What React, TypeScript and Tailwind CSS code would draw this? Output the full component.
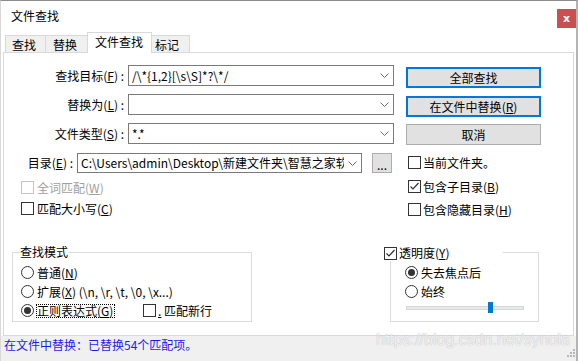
import type { FC, ReactNode } from "react";

const Acc: FC<{ k: string }> = ({ k }) => (
  <>
    (<span className="underline underline-offset-[1px] decoration-1">{k}</span>)
  </>
);

const Box: FC<{ checked?: boolean; disabled?: boolean }> = ({ checked, disabled }) => (
  <span
    className={`w-[13px] h-[13px] shrink-0 border bg-white flex items-center justify-center ${
      disabled ? "border-[#c4c4c4]" : "border-[#333333]"
    }`}
  >
    {checked && (
      <svg width="11" height="11" viewBox="0 0 11 11">
        <path d="M1.5 5.5 L4 8 L9.5 2" fill="none" stroke="#333" strokeWidth="1.2" />
      </svg>
    )}
  </span>
);

const Radio: FC<{ on?: boolean }> = ({ on }) => (
  <span className="w-[13px] h-[13px] shrink-0 rounded-full border border-[#333333] bg-white flex items-center justify-center">
    {on && <span className="w-[7px] h-[7px] rounded-full bg-[#333333]" />}
  </span>
);

const Chevron = () => (
  <svg width="9" height="5" viewBox="0 0 9 5" className="shrink-0">
    <path d="M0.5 0.5 L4.5 4.5 L8.5 0.5" fill="none" stroke="#6d6d6d" strokeWidth="1" />
  </svg>
);

const Combo: FC<{ size: string; text?: string }> = ({ size, text }) => (
  <div className={`${size} border border-[#7a7a7a] bg-white flex items-center pl-[3px] pr-[4px]`}>
    <span className="flex-1 min-w-0 overflow-hidden whitespace-nowrap">{text}</span>
    <span className="ml-[4px] flex items-center">
      <Chevron />
    </span>
  </div>
);

const Check: FC<{ checked?: boolean; disabled?: boolean; gap: string; children: ReactNode; className?: string }> = ({
  checked,
  disabled,
  gap,
  children,
  className,
}) => (
  <div className={`h-[13px] flex items-center ${className ?? ""}`}>
    <Box checked={checked} disabled={disabled} />
    <span className={`${gap} whitespace-nowrap ${disabled ? "text-[#a0a0a0]" : ""}`}>{children}</span>
  </div>
);

const App: FC = () => {
  return (
    <div className="w-[578px] h-[361px] bg-white relative overflow-hidden flex flex-col border-t border-t-[#8c8c8c] border-l border-l-[#d8d8d8] border-r-2 border-r-[#b4b4b4] text-[12px] leading-[16px] text-black font-['Noto_Sans_CJK_SC',sans-serif]">
      {/* title bar */}
      <div className="h-[31px] flex items-start shrink-0">
        <span className="ml-[10px] mt-[7px]">文件查找</span>
        <div className="ml-auto mt-[8px] w-[19px] h-[19px] bg-[#c75050] text-white flex items-center justify-center font-bold text-[11px] leading-none font-['DejaVu_Sans',sans-serif]">
          x
        </div>
      </div>

      {/* tabs */}
      <div className="h-[21px] flex items-end pl-[4px] shrink-0">
        <div className="w-[40px] h-[18px] border-l border-t border-[#d9d9d9] bg-[#f0f0f0] pl-[6px] flex items-center">查找</div>
        <div className="w-[42px] h-[18px] border-l border-t border-[#d9d9d9] bg-[#f0f0f0] pl-[7px] flex items-center">替换</div>
        <div className="relative z-10 w-[65px] h-[21px] border-l border-t border-r border-[#d9d9d9] bg-white pl-[7px] pt-[1px]">
          文件查找
        </div>
        <div className="w-[38px] h-[18px] border-t border-r border-[#d9d9d9] bg-[#f0f0f0] pl-[3px] flex items-center">标记</div>
      </div>

      {/* panel */}
      <div className="-mt-px ml-[2px] mr-[2px] h-[284px] shrink-0 border border-[#d9d9d9] bg-white flex flex-col">
        <div className="flex pt-[12px]">
          {/* left column */}
          <div className="w-[390px] flex flex-col">
            <div className="h-[21px] flex items-center">
              <span className="w-[120px] text-right whitespace-nowrap">
                查找目标<Acc k="F" /> :
              </span>
              <div className="ml-[4px]">
                <Combo size="w-[266px] h-[21px]" text="/\*{1,2}[\s\S]*?\*/" />
              </div>
            </div>
            <div className="mt-[8px] h-[21px] flex items-center">
              <span className="w-[120px] text-right whitespace-nowrap">
                替换为<Acc k="L" /> :
              </span>
              <div className="ml-[4px]">
                <Combo size="w-[266px] h-[21px]" />
              </div>
            </div>
            <div className="mt-[8px] h-[21px] flex items-center">
              <span className="w-[120px] text-right whitespace-nowrap">
                文件类型<Acc k="S" /> :
              </span>
              <div className="ml-[4px]">
                <Combo size="w-[266px] h-[21px]" text="*.*" />
              </div>
            </div>
            <div className="mt-[9px] h-[20px] flex items-center">
              <span className="w-[69px] text-right whitespace-nowrap">
                目录<Acc k="E" /> :
              </span>
              <div className="ml-[4px]">
                <Combo size="w-[285px] h-[20px]" text="C:\Users\admin\Desktop\新建文件夹\智慧之家软著" />
              </div>
              <div className="ml-[10px] w-[20px] h-[20px] border border-[#adadad] bg-[#e1e1e1] flex items-end justify-center leading-[14px]">
                ...
              </div>
            </div>
            <Check disabled gap="ml-[3px]" className="mt-[8px] pl-[17px]">
              全词匹配<Acc k="W" />
            </Check>
            <Check gap="ml-[3px]" className="mt-[8px] pl-[17px]">
              匹配大小写<Acc k="C" />
            </Check>
          </div>

          {/* right column */}
          <div className="ml-[12px] pt-[2px] flex flex-col">
            <div className="w-[135px] h-[21px] border-2 border-[#0078d7] bg-[#e1e1e1] flex items-center justify-center">
              全部查找
            </div>
            <div className="mt-[8px] w-[135px] h-[21px] border-2 border-[#0078d7] bg-[#e1e1e1] flex items-center justify-center">
              在文件中替换<Acc k="R" />
            </div>
            <div className="mt-[7px] w-[135px] h-[21px] border border-[#adadad] bg-[#e1e1e1] flex items-center justify-center">
              取消
            </div>
            <Check gap="ml-[2px]" className="mt-[11px] ml-[2px]">
              当前文件夹。
            </Check>
            <Check checked gap="ml-[2px]" className="mt-[11px] ml-[2px]">
              包含子目录<Acc k="B" />
            </Check>
            <Check gap="ml-[2px]" className="mt-[10px] ml-[2px]">
              包含隐藏目录<Acc k="H" />
            </Check>
          </div>
        </div>

        <div className="flex mt-[36px]">
          {/* search mode */}
          <div className="relative ml-[8px] w-[240px] h-[70px] border border-[#dcdcdc] pl-[8px] pt-[13px] flex flex-col gap-[6px]">
            <span className="absolute left-[7px] top-[-9px] bg-white">查找模式</span>
            <div className="h-[13px] flex items-center">
              <Radio />
              <span className="ml-[3px]">
                普通<Acc k="N" />
              </span>
            </div>
            <div className="h-[13px] flex items-center">
              <Radio />
              <span className="ml-[3px] whitespace-nowrap">
                扩展<Acc k="X" /> (\n, \r, \t, \0, \x...)
              </span>
            </div>
            <div className="h-[13px] flex items-center">
              <div className="w-[122px] shrink-0 flex items-center">
                <Radio on />
                <span className="ml-[2px] h-[14px] pr-[1px] border border-dotted border-black flex items-center whitespace-nowrap">
                  正则表达式<Acc k="G" />
                </span>
              </div>
              <Box />
              <span className="ml-[2px] whitespace-nowrap">
                <span className="underline underline-offset-[1px]">.</span> 匹配新行
              </span>
            </div>
          </div>

          {/* transparency */}
          <div className="relative ml-[138px] w-[149px] h-[70px] border border-[#dcdcdc] pl-[14px] pt-[13px] flex flex-col">
            <div className="absolute left-[-7px] top-[-8px] w-[119px] h-[16px] bg-white flex items-center">
              <Box checked />
              <span className="ml-[2px]">
                透明度<Acc k="Y" />
              </span>
            </div>
            <div className="h-[13px] flex items-center">
              <Radio on />
              <span className="ml-[3px]">失去焦点后</span>
            </div>
            <div className="mt-[6px] h-[13px] flex items-center">
              <Radio />
              <span className="ml-[3px]">始终</span>
            </div>
            <div className="relative mt-[4px] ml-[1px] w-[118px] h-[11px] flex items-center">
              <div className="w-full h-[4px] border border-[#d6d6d6] bg-[#e7eaea]" />
              <div className="absolute left-[82px] top-0 w-[5px] h-[11px] bg-[#0078d7]" />
            </div>
          </div>
        </div>
      </div>

      {/* status bar */}
      <div className="flex-1 bg-[#f0f0f0] flex items-start pl-[3px] pt-[1px]">
        <span className="text-[#1c1cf0] whitespace-nowrap">在文件中替换：已替换54个匹配项。</span>
        <svg width="8" height="8" viewBox="0 0 8 8" className="ml-auto mr-[1px] mt-[12px]">
          <rect x="6" y="0" width="2" height="2" fill="#b8b8b8" />
          <rect x="3" y="3" width="2" height="2" fill="#b8b8b8" />
          <rect x="6" y="3" width="2" height="2" fill="#b8b8b8" />
          <rect x="0" y="6" width="2" height="2" fill="#b8b8b8" />
          <rect x="3" y="6" width="2" height="2" fill="#b8b8b8" />
          <rect x="6" y="6" width="2" height="2" fill="#b8b8b8" />
        </svg>
      </div>

      {/* watermark */}
      <span className="absolute left-[375px] top-[331px] text-[16px] leading-[16px] text-white/80 font-['Liberation_Sans',sans-serif] whitespace-nowrap [text-shadow:0_0_1px_rgba(110,110,110,0.6)]">
        https://blog.csdn.net/synola
      </span>
    </div>
  );
};

export default App;
